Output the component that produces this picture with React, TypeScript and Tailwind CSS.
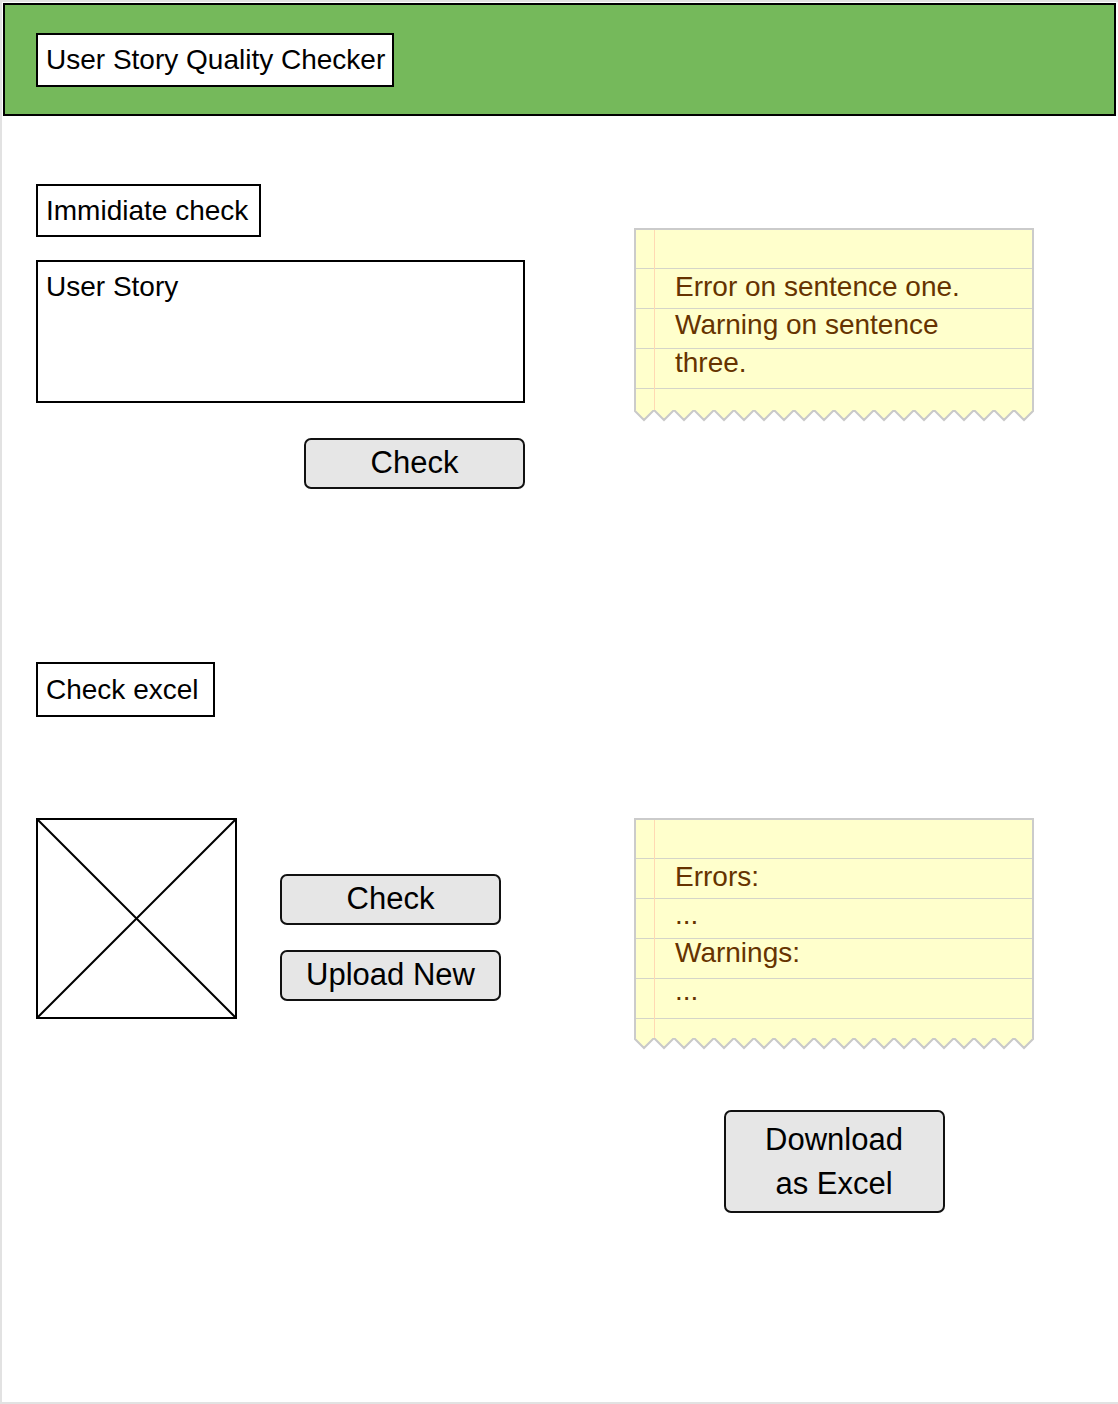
import React from "react";

const font = "font-['Liberation_Sans','Helvetica',Arial,sans-serif]";

function Label({ text, className }: { text: string; className: string }) {
  return (
    <div className={`self-start flex items-center whitespace-nowrap border-2 border-black bg-white px-[8px] text-[28px] leading-none text-black ${className}`}>
      {text}
    </div>
  );
}

function Button({ children, className }: { children: React.ReactNode; className: string }) {
  return (
    <div
      className={`flex items-center justify-center rounded-[7px] border-2 border-[#111] bg-[#e6e6e6] text-center text-[31px] text-black ${className}`}
    >
      {children}
    </div>
  );
}

function Zigzag() {
  const teeth = 20;
  const w = 400;
  const step = w / teeth;
  let pts = "0,0 ";
  for (let i = 0; i < teeth; i++) {
    pts += `${i * step + step / 2},10 ${(i + 1) * step},0 `;
  }
  return (
    <svg width="400" height="12" viewBox="0 0 400 12" className="block -mt-px">
      <polygon points={pts} fill="#ffffcc" />
      <polyline points={pts} fill="none" stroke="#c9c9c9" strokeWidth="2" />
    </svg>
  );
}

function Note({ lines, h }: { lines: string[]; h: string }) {
  return (
    <div className="w-[400px]">
      <div
        className={`${h} border-x-2 border-t-2 border-[#cbcbcb] pl-[39px] pt-[38px] text-[28px] leading-[38px] text-[#663300] bg-[#ffffcc] bg-[linear-gradient(to_right,transparent_18px,#ffd9b3_18px,#ffd9b3_19px,transparent_19px),repeating-linear-gradient(to_bottom,transparent_0px,transparent_38px,#d5d5c8_38px,#d5d5c8_39px,transparent_39px,transparent_40px)]`}
      >
        {lines.map((l, i) => (
          <div key={i}>{l}</div>
        ))}
      </div>
      <Zigzag />
    </div>
  );
}

export default function App() {
  return (
    <div className={`${font} w-[1118px] h-[1404px] bg-white border-l-2 border-t-2 border-b-2 border-[#e2e2e2] flex flex-col`}>
      <header className="ml-px mt-px w-[1113px] h-[113px] border-2 border-black bg-[#75b95b] flex items-center pl-[31px]">
        <div className="flex h-[54px] items-center whitespace-nowrap border-2 border-black bg-white pl-[8px] pr-[7px] text-[28px] leading-none text-black">
          User Story Quality Checker
        </div>
      </header>

      <div className="pl-[34px] flex flex-col">
        {/* Immediate check */}
        <section className="mt-[68px] flex">
          <div className="w-[489px] flex flex-col">
            <Label text="Immidiate check" className="h-[53px] w-[225px]" />
            <div className="mt-[23px] h-[143px] border-2 border-black px-[8px] pt-[10px] text-[28px] leading-[30px] text-black">
              User Story
            </div>
            <Button className="mt-[35px] self-end w-[221px] h-[51px]">Check</Button>
          </div>
          <div className="ml-[109px] pt-[44px]">
            <Note lines={["Error on sentence one.", "Warning on sentence", "three."]} h="h-[183px]" />
          </div>
        </section>

        {/* Check excel */}
        <section className="mt-[173px] flex flex-col">
          <Label text="Check excel" className="h-[55px] w-[179px]" />
          <div className="mt-[101px] flex">
            <div className="w-[201px] h-[201px] border-2 border-black">
              <svg width="197" height="197" viewBox="0 0 197 197" className="block">
                <line x1="0" y1="0" x2="197" y2="197" stroke="black" strokeWidth="2" />
                <line x1="197" y1="0" x2="0" y2="197" stroke="black" strokeWidth="2" />
              </svg>
            </div>
            <div className="ml-[43px] pt-[56px] flex flex-col gap-[25px]">
              <Button className="w-[221px] h-[51px]">Check</Button>
              <Button className="w-[221px] h-[51px]">Upload New</Button>
            </div>
            <div className="ml-[133px] flex flex-col">
              <Note lines={["Errors:", "...", "Warnings:", "..."]} h="h-[221px]" />
              <Button className="mt-[60px] mx-auto w-[221px] h-[103px] leading-[44px]">
                Download
                <br />
                as Excel
              </Button>
            </div>
          </div>
        </section>
      </div>
    </div>
  );
}
